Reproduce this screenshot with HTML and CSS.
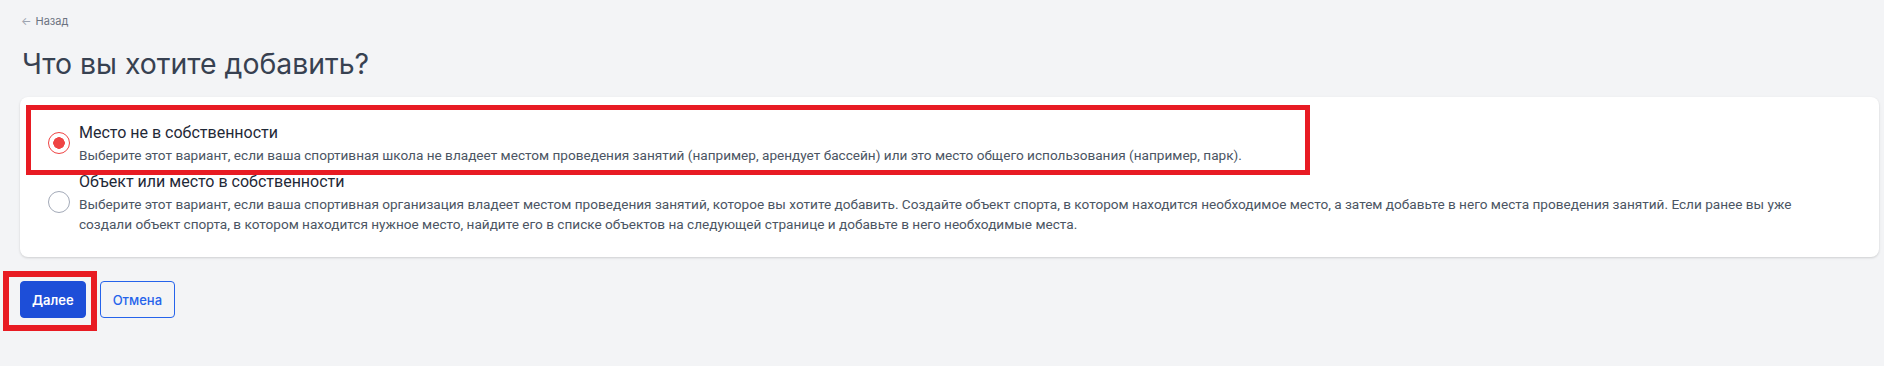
FILE: index.html
```html
<!DOCTYPE html>
<html lang="ru">
<head>
    <meta charset="UTF-8">
    <meta name="viewport" content="width=device-width, initial-scale=1.0">
    <title>Что вы хотите добавить?</title>
    <link rel="stylesheet" href="styles.css">
</head>
<body>
    <a class="back-link" href="#"><span class="back-arrow">&larr;</span> Назад</a>

    <h1>Что вы хотите добавить?</h1>

    <div class="card">
        <label class="option">
            <input type="radio" name="kind" value="rented" checked>
            <div class="option-text">
                <div class="option-title">Место не в собственности</div>
                <div class="option-desc">Выберите этот вариант, если ваша спортивная школа не владеет местом проведения занятий (например, арендует бассейн) или это место общего использования (например, парк).</div>
            </div>
        </label>

        <label class="option">
            <input type="radio" name="kind" value="owned">
            <div class="option-text">
                <div class="option-title">Объект или место в собственности</div>
                <div class="option-desc">Выберите этот вариант, если ваша спортивная организация владеет местом проведения занятий, которое вы хотите добавить. Создайте объект спорта, в котором находится необходимое место, а затем добавьте в него места проведения занятий. Если ранее вы уже создали объект спорта, в котором находится нужное место, найдите его в списке объектов на следующей странице и добавьте в него необходимые места.</div>
            </div>
        </label>

        <!-- рамка-пометка поверх первого варианта -->
        <div class="mark mark-option"></div>
    </div>

    <div class="actions">
        <div class="btn-wrap">
            <button class="btn btn-primary">Далее</button>
            <div class="mark mark-button"></div>
        </div>
        <button class="btn btn-outline">Отмена</button>
    </div>
</body>
</html>
```

FILE: styles.css
```css
body {
    font-family: Inter, 'Noto Sans', sans-serif;
    color: #374151;
    margin: 0;
    padding: 13px 5px 20px 20px;
    background-color: #f3f4f6;
}
.back-link {
    display: flex;
    align-items: center;
    gap: 4px;
    width: fit-content;
    height: 16px;
    margin-left: 1px;
    font-size: 11px;
    line-height: 16px;
    color: #6b7280;
    text-decoration: none;
}
.back-arrow {
    font-size: 11px;
    color: #9ca3af;
}
h1 {
    font-size: 28.4px;
    line-height: 36px;
    font-weight: 400;
    color: #374151;
    margin: 17px 0 15px 2px;
}
.card {
    position: relative;
    display: flex;
    flex-direction: column;
    gap: 5px;
    padding: 24px 44px 23px 28px;
    background-color: #fff;
    border-radius: 8px;
    box-shadow: 0 1px 3px rgba(0, 0, 0, 0.1), 0 1px 2px rgba(0, 0, 0, 0.06);
}
.option {
    display: flex;
    align-items: center;
    gap: 9px;
    cursor: pointer;
}
.option input[type="radio"] {
    appearance: none;
    flex: none;
    width: 22px;
    height: 22px;
    margin: 0;
    border: 1.5px solid #a3aab8;
    border-radius: 50%;
    background-color: #fff;
    box-sizing: border-box;
}
.option input[type="radio"]:checked {
    border: 1px solid #ef4444;
    background: radial-gradient(circle, #ef4444 0 5.5px, #fff 6px);
}
.option-text {
    font-family: Roboto, 'Liberation Sans', sans-serif;
}
.option-title {
    font-size: 16px;
    line-height: 24px;
    color: #1f2937;
}
.option-desc {
    font-size: 13.6px;
    line-height: 20px;
    color: #4b5563;
}
.mark {
    position: absolute;
    border: 5px solid #e81b23;
    pointer-events: none;
}
.mark-option {
    left: 6px;
    top: 8px;
    width: 1274px;
    height: 60px;
}
.actions {
    display: flex;
    gap: 14px;
    margin-top: 24px;
}
.btn-wrap {
    position: relative;
}
.mark-button {
    left: -17px;
    top: -10px;
    width: 82px;
    height: 48px;
    border-width: 6px;
}
.btn {
    height: 37px;
    padding: 0 11px;
    border-radius: 4px;
    font-family: Inter, sans-serif;
    font-size: 13px;
    cursor: pointer;
}
.btn-primary {
    background-color: #1d4ed8;
    border: 1px solid #1d4ed8;
    color: #fff;
    font-weight: 600;
}
.btn-outline {
    padding: 0 12px;
    background-color: transparent;
    border: 1px solid #2563eb;
    color: #2563eb;
    font-weight: 500;
}
```
